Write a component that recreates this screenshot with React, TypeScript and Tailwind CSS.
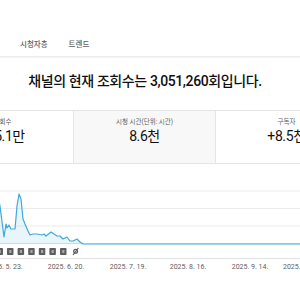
const pts: [number, number][] = [
  [-2, 9], [0, 19], [4, 50], [6, 37], [7, 41], [9, 38], [11, 42], [13, 42], [15, 42],
  [17, 19], [19, 7], [21, 12], [23, 32], [25, 37], [28, 44], [30, 48], [33, 47], [37, 47],
  [42, 48], [44, 47], [46, 49], [51, 45], [54, 47], [57, 49], [60, 49], [63, 52], [67, 50],
  [70, 54], [73, 54], [77, 52], [80, 55], [83, 57], [300, 57],
]

const linePath = pts.map((p, i) => `${i === 0 ? 'M' : 'L'}${p[0]} ${p[1]}`).join(' ')
const areaPath = `${linePath} L300 57 L-2 57 Z`

const badges = [-3.5, 7, 17.6, 28.2, 38.8, 49.4, 60]

const ticks = [
  { x: 4.5, label: '2025. 5. 23.' },
  { x: 66, label: '2025. 6. 20.' },
  { x: 128, label: '2025. 7. 19.' },
  { x: 188, label: '2025. 8. 16.' },
  { x: 250, label: '2025. 9. 14.' },
]

function MetricCard({ label, value, gray, valueClass = '' }: { label: string; value: string; gray?: boolean; valueClass?: string }) {
  return (
    <div className={`w-[142px] h-[52px] border-r border-[#e5e5e5] pt-[7px] flex flex-col items-center ${gray ? 'bg-[#f8f8f8]' : 'bg-white'}`}>
      <p className="text-[6.5px] leading-[8px] text-[#606060]">{label}</p>
      <p className={`mt-[2px] text-[14px] leading-[16px] text-[#0f0f0f] tracking-[-0.4px] ${valueClass}`}>{value}</p>
    </div>
  )
}

export default function App() {
  return (
    <div className="w-[300px] h-[300px] overflow-hidden bg-white pt-[34px] font-['Roboto','Noto_Sans_CJK_KR',sans-serif]">
      <div className="h-[23px] flex items-center gap-[21px] pl-[20px] border-b border-[#ececec] shadow-[0_1px_1px_rgba(0,0,0,0.04)]">
        <span className="text-[7.5px] font-medium text-[#606060]">시청자층</span>
        <span className="text-[7.5px] font-medium text-[#606060]">트렌드</span>
      </div>

      <h1 className="w-[290px] mt-[14px] text-center text-[14px] leading-[20px] font-medium tracking-[-0.4px] text-[#0f0f0f]">
        채널의 현재 조회수는 3,051,260회입니다.
      </h1>

      <div className="ml-[-68px] w-[426px] mt-[19px] flex border-t border-b border-[#e5e5e5]">
        <MetricCard label="조회수" value="5.1만" valueClass="ml-[14px]" />
        <MetricCard label="시청 시간(단위: 시간)" value="8.6천" gray />
        <MetricCard label="구독자" value="+8.5천" />
      </div>

      <svg className="mt-[23px] block" width="300" height="86" viewBox="0 0 300 86">
        <line x1="0" x2="300" y1="4" y2="4" stroke="#ececec" strokeWidth="1" />
        <line x1="0" x2="300" y1="21.5" y2="21.5" stroke="#ececec" strokeWidth="1" />
        <line x1="0" x2="300" y1="39" y2="39" stroke="#ececec" strokeWidth="1" />
        <line x1="0" x2="300" y1="56.5" y2="56.5" stroke="#e2e2e2" strokeWidth="1" />
        <path d={areaPath} fill="rgba(65,172,220,0.12)" />
        <path d={linePath} fill="none" stroke="#3fa9db" strokeWidth="1.2" strokeLinejoin="round" />
        {badges.map((x) => (
          <g key={x}>
            <rect x={x} y="61" width="6.5" height="7" rx="0.8" fill="#5e5e5e" />
            <rect x={x + 2.2} y="63" width="2.2" height="3" fill="#a8a8a8" />
          </g>
        ))}
        <circle cx="75.6" cy="64.3" r="1.9" fill="none" stroke="#5e5e5e" strokeWidth="1.3" />
        <line x1="73" y1="68" x2="78.3" y2="61" stroke="#5e5e5e" strokeWidth="1.2" />
        <line x1="0" x2="300" y1="71.5" y2="71.5" stroke="#e2e2e2" strokeWidth="1" />
        {ticks.map((t) => (
          <text key={t.label} x={t.x} y="81.5" textAnchor="middle" fontSize="7" fill="#606060" fontFamily="Roboto, sans-serif">
            {t.label}
          </text>
        ))}
        <text x="283" y="81.5" fontSize="7" fill="#606060" fontFamily="Roboto, sans-serif">2025. 10. 12.</text>
      </svg>
    </div>
  )
}
